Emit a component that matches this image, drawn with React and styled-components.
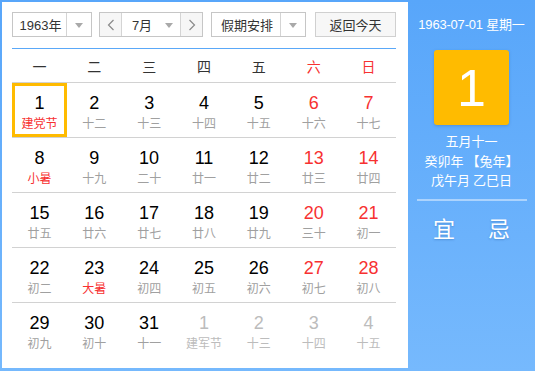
import React from "react";
import styled, { createGlobalStyle } from "styled-components";

const Global = createGlobalStyle`
  html, body { margin: 0; padding: 0; background: #fff; }
  body { font-family: "Liberation Sans", Arial, "Noto Sans CJK SC", sans-serif; }
  * { box-sizing: border-box; }
`;

const Frame = styled.div`
  width: 535px;
  height: 371px;
  display: flex;
  background: linear-gradient(180deg, #58a6fa 0%, #76b9fd 100%);
`;

const Main = styled.div`
  width: 406px;
  margin: 2px 0 3px 2px;
  background: #fff;
  padding: 10px 12px 0 10px;
  display: flex;
  flex-direction: column;
`;

const Toolbar = styled.div`
  display: flex;
  align-items: stretch;
  height: 25px;
  font-family: "Liberation Sans", Arial, "Noto Sans CJK SC", sans-serif;
  font-size: 13px;
  color: #333;
`;

const Box = styled.div`
  display: flex;
  align-items: stretch;
  width: ${(p) => p.$w}px;
  margin-right: ${(p) => p.$mr || 0}px;
  border: 1px solid #c6c6c6;
  background: #fff;
`;

const Label = styled.div`
  flex: 1;
  display: flex;
  align-items: center;
  justify-content: center;
  padding-left: ${(p) => p.$pl || 0}px;
`;

const ArrowCell = styled.div`
  width: ${(p) => p.$w || 24}px;
  display: flex;
  align-items: center;
  justify-content: center;
  border-left: ${(p) => (p.$divider ? "1px solid #d4d4d4" : "none")};
`;

const Tri = styled.span`
  width: 0;
  height: 0;
  border-left: 4px solid transparent;
  border-right: 4px solid transparent;
  border-top: 5px solid #a9a9a9;
  margin-top: 1px;
`;

const NavBtn = styled.div`
  width: 22px;
  display: flex;
  align-items: center;
  justify-content: center;
  background: #f6f6f6;
  border-left: ${(p) => (p.$side === "right" ? "1px solid #d4d4d4" : "none")};
  border-right: ${(p) => (p.$side === "left" ? "1px solid #d4d4d4" : "none")};
`;

const TodayBtn = styled.div`
  width: 81px;
  display: flex;
  align-items: center;
  justify-content: center;
  border: 1px solid #d0d0d0;
  background: #f7f7f7;
  color: #333;
  margin-left: auto;
`;

const BlueRule = styled.div`
  height: 1px;
  background: #5aa8f8;
  margin-top: 11px;
`;

const Grid = styled.div`
  display: grid;
  grid-template-columns: repeat(7, 1fr);
`;

const Head = styled.div`
  height: 33px;
  display: flex;
  align-items: center;
  justify-content: center;
  font-family: "Noto Sans CJK SC", sans-serif;
  font-size: 14px;
  color: ${(p) => (p.$red ? "#f73131" : "#333")};
`;

const Cell = styled.div`
  position: relative;
  height: 55px;
  border-top: ${(p) => (p.$line ? "1px solid #d2d2d2" : "none")};
  display: flex;
  flex-direction: column;
  align-items: center;
  padding-top: 9px;
`;

const TodayRing = styled.div`
  position: absolute;
  left: 0;
  right: 0;
  top: 0;
  bottom: 0;
  border: 3px solid #ffbb00;
`;

const Num = styled.div`
  font-family: "Liberation Sans", Arial, sans-serif;
  font-size: 18px;
  line-height: 22px;
  color: ${(p) => p.$c};
`;

const Lunar = styled.div`
  font-family: "Noto Sans CJK SC", sans-serif;
  font-size: 12px;
  line-height: 17px;
  color: ${(p) => p.$c};
`;

const Side = styled.div`
  flex: 1;
  display: flex;
  flex-direction: column;
  align-items: center;
  color: #fff;
  font-family: "Liberation Sans", Arial, "Noto Sans CJK SC", sans-serif;
`;

const DateLine = styled.div`
  font-size: 13px;
  margin-top: 17px;
  line-height: 16px;
  letter-spacing: -0.2px;
`;

const BigDay = styled.div`
  width: 75px;
  height: 75px;
  margin-top: 17px;
  border-radius: 3px;
  background: #ffbb00;
  box-shadow: 0 1px 3px rgba(40, 90, 160, 0.35);
  display: flex;
  align-items: center;
  justify-content: center;
  font-family: "Liberation Sans", Arial, sans-serif;
  font-size: 52px;
  color: #fff;
`;

const LunarInfo = styled.div`
  margin-top: 6px;
  font-family: "Noto Sans CJK SC", sans-serif;
  font-size: 13px;
  line-height: 19.5px;
  text-align: center;
`;

const SideRule = styled.div`
  width: 110px;
  height: 2px;
  margin-top: 9px;
  background: rgba(255, 255, 255, 0.45);
`;

const YiJi = styled.div`
  display: flex;
  gap: 33px;
  margin-top: 13px;
  font-family: "Noto Sans CJK SC", sans-serif;
  font-size: 22px;
  line-height: 26px;
  text-shadow: 0 1px 2px rgba(30, 80, 150, 0.35);
`;

const Chevron = ({ dir }) => (
  <svg width="8" height="12" viewBox="0 0 8 12">
    <polyline
      points={dir === "left" ? "6.5,1 1.5,6 6.5,11" : "1.5,1 6.5,6 1.5,11"}
      fill="none"
      stroke="#8a8a8a"
      strokeWidth="1.2"
    />
  </svg>
);

const RED = "#f73131";
const BLACK = "#000";
const GRAY = "#a0a0a0";
const LIGHT = "#bcbcbc";

const rows = [
  [[1, "建党节", "h", true], [2, "十二"], [3, "十三"], [4, "十四"], [5, "十五"], [6, "十六", "w"], [7, "十七", "w"]],
  [[8, "小暑", "h"], [9, "十九"], [10, "二十"], [11, "廿一"], [12, "廿二"], [13, "廿三", "w"], [14, "廿四", "w"]],
  [[15, "廿五"], [16, "廿六"], [17, "廿七"], [18, "廿八"], [19, "廿九"], [20, "三十", "w"], [21, "初一", "w"]],
  [[22, "初二"], [23, "大暑", "h"], [24, "初四"], [25, "初五"], [26, "初六"], [27, "初七", "w"], [28, "初八", "w"]],
  [[29, "初九"], [30, "初十"], [31, "十一"], [1, "建军节", "o"], [2, "十三", "o"], [3, "十四", "o"], [4, "十五", "o"]],
];

const heads = ["一", "二", "三", "四", "五", "六", "日"];

function colors(kind, col) {
  if (kind === "o") return [LIGHT, LIGHT];
  if (kind === "h") return [col >= 5 ? RED : BLACK, RED];
  if (kind === "w" || col >= 5) return [RED, GRAY];
  return [BLACK, GRAY];
}

export default function App() {
  return (
    <>
      <Global />
      <Frame>
        <Main>
          <Toolbar>
            <Box $w={80} $mr={7}>
              <Label $pl={2}>1963年</Label>
              <ArrowCell $divider $w={25}>
                <Tri />
              </ArrowCell>
            </Box>
            <Box $w={104} $mr={8}>
              <NavBtn $side="left">
                <Chevron dir="left" />
              </NavBtn>
              <Label $pl={4}>7月</Label>
              <ArrowCell $w={22}>
                <Tri />
              </ArrowCell>
              <NavBtn $side="right">
                <Chevron dir="right" />
              </NavBtn>
            </Box>
            <Box $w={95}>
              <Label $pl={2}>假期安排</Label>
              <ArrowCell $divider $w={25}>
                <Tri />
              </ArrowCell>
            </Box>
            <TodayBtn>返回今天</TodayBtn>
          </Toolbar>
          <BlueRule />
          <Grid>
            {heads.map((h, i) => (
              <Head key={h} $red={i >= 5}>
                {h}
              </Head>
            ))}
            {rows.map((row, r) =>
              row.map(([n, l, kind, today], c) => {
                const [nc, lc] = colors(kind, c);
                return (
                  <Cell key={`${r}-${c}`} $line>
                    {today && <TodayRing />}
                    <Num $c={nc}>{n}</Num>
                    <Lunar $c={lc}>{l}</Lunar>
                  </Cell>
                );
              })
            )}
          </Grid>
        </Main>
        <Side>
          <DateLine>1963-07-01 星期一</DateLine>
          <BigDay>1</BigDay>
          <LunarInfo>
            五月十一
            <br />
            癸卯年 【兔年】
            <br />
            戊午月 乙巳日
          </LunarInfo>
          <SideRule />
          <YiJi>
            <span>宜</span>
            <span>忌</span>
          </YiJi>
        </Side>
      </Frame>
    </>
  );
}
